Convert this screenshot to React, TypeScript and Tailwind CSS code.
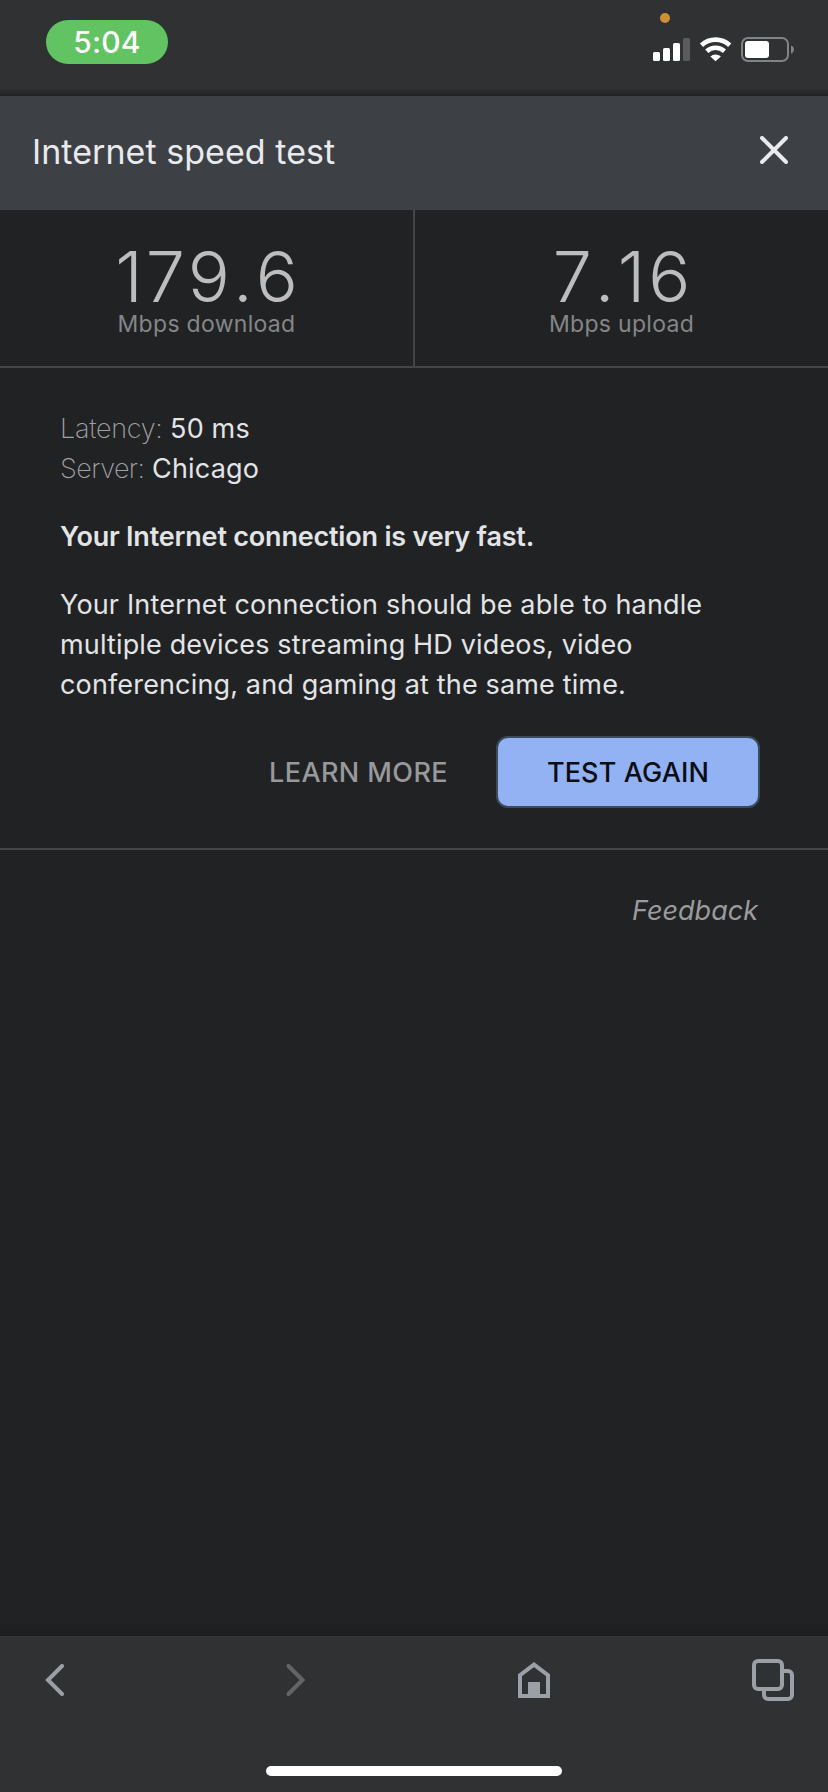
const StatusIcons = () => {
  return (
    <svg width="144" height="40" viewBox="650 30 144 40" fill="none" aria-hidden="true">
      <rect x="653" y="52" width="7" height="9" rx="1.6" fill="#fff" />
      <rect x="663" y="48" width="7" height="13" rx="1.6" fill="#fff" />
      <rect x="673" y="43" width="7" height="18" rx="1.6" fill="#fff" />
      <rect x="683" y="38" width="7" height="23" rx="1.6" fill="#5b5b5d" />
      <g stroke="#fff" strokeWidth="4.6">
        <path d="M701.5 45.2a20.6 20.6 0 0 1 28.2 0" />
        <path d="M706.8 51.2a13 13 0 0 1 17.6 0" />
      </g>
      <path d="M710.3 56.4a8.2 8.2 0 0 1 10.6 0l-5.3 4.8z" fill="#fff" />
      <rect x="742" y="38" width="46" height="23" rx="6" stroke="#838384" strokeWidth="2" />
      <rect x="745" y="41" width="24" height="17" rx="3" fill="#fff" />
      <path d="M791 45.5c4 1.2 4 7 0 8.2z" fill="#838384" />
    </svg>
  );
};

const StatusBar = () => {
  return (
    <div className="relative flex h-24 items-start justify-between bg-linear-to-b from-[#303133] from-92% to-[#202123] pl-[46px] pr-[34px] pt-5">
      <div className="flex h-11 w-[122px] items-center justify-center rounded-full bg-[#61c361] text-[30px] font-medium tracking-[0.2px] text-white">
        5:04
      </div>
      <div className="pt-[10px]">
        <StatusIcons />
      </div>
      <span className="absolute left-[660px] top-[13px] size-[10px] rounded-full bg-[#d18f35]" />
    </div>
  );
};

const Header = () => {
  return (
    <header className="flex h-[114px] items-center justify-between bg-[#3d4044] pl-8 pr-10">
      <h1 className="mb-[3px] text-[34px] leading-[44px] tracking-[0.05px] text-[#e8eaed]">Internet speed test</h1>
      <button type="button" aria-label="Close" className="mb-[6px]">
        <svg width="28" height="28" viewBox="0 0 28 28" stroke="#e8eaed" strokeWidth="4" strokeLinecap="round">
          <path d="M2 2l24 24M26 2L2 26" />
        </svg>
      </button>
    </header>
  );
};

type MetricProps = {
  value: string;
  label: string;
};

const Metric = ({ value, label }: MetricProps) => {
  return (
    <div className="flex flex-col items-center pt-8">
      <span className="pl-[3px] text-[70px] font-light leading-[70px] tracking-[3px] text-[#bdbdbe] [font-kerning:none]">
        {value}
      </span>
      <span className="-mt-0.5 text-[23px] leading-7 tracking-[0.3px] text-[#858688]">{label}</span>
    </div>
  );
};

const Results = () => {
  return (
    <section className="flex h-[482px] flex-col border-b-2 border-[#444546] pl-[60px] pr-[68px] pt-[41px] text-[27px] leading-10 tracking-[0.15px] text-[#e3e4e6]">
      <p>
        <span className="font-extralight tracking-[-0.3px] text-[#a0a1a3]">Latency:</span> 50 ms
      </p>
      <p>
        <span className="font-extralight tracking-[-0.6px] text-[#a0a1a3]">Server:</span> Chicago
      </p>
      <p className="mt-7 font-semibold tracking-[-0.2px]">Your Internet connection is very fast.</p>
      <p className="mt-7">
        Your Internet connection should be able to handle
        <br />
        multiple devices streaming HD videos, video
        <br />
        conferencing, and gaming at the same time.
      </p>
      <div className="mt-[31px] flex items-center justify-end gap-12">
        <button type="button" className="pt-0.5 font-medium tracking-[0.4px] text-[#98999b]">
          LEARN MORE
        </button>
        <button
          type="button"
          className="h-[72px] w-[264px] rounded-xl border-2 border-[#3c4a5e] bg-[#92b2f3] pt-0.5 font-medium text-[#0b0d12]">
          TEST AGAIN
        </button>
      </div>
    </section>
  );
};

const Toolbar = () => {
  return (
    <nav className="flex h-[156px] flex-col items-center border-t border-[#343537] bg-[#303133]">
      <div className="flex h-[86px] w-full items-center justify-between px-[34px]">
        <svg width="42" height="32" viewBox="0 0 42 32" fill="none" stroke="#9aa0a6" strokeWidth="4" strokeLinecap="round">
          <path d="M28 2L14 16l14 14" />
        </svg>
        <svg width="42" height="32" viewBox="0 0 42 32" fill="none" stroke="#636466" strokeWidth="4" strokeLinecap="round">
          <path d="M15.5 2l14 14-14 14" />
        </svg>
        <svg width="42" height="36" viewBox="-5 0 42 36" fill="none">
          <path d="M2 34V13.2L16 2.6l14 10.6V34z" stroke="#9aa0a6" strokeWidth="4" />
          <path d="M10 20h12v14H10z" fill="#9aa0a6" />
        </svg>
        <svg width="42" height="42" viewBox="0 0 42 42" fill="none" stroke="#9aa0a6" strokeWidth="4">
          <rect x="2" y="2" width="28" height="28" rx="4" />
          <path d="M31 12h5a4 4 0 0 1 4 4v20a4 4 0 0 1-4 4H16a4 4 0 0 1-4-4v-5" />
        </svg>
      </div>
      <div className="mt-[43px] h-[10px] w-[296px] rounded-full bg-white" />
    </nav>
  );
};

const App = () => {
  return (
    <div className="flex h-[1792px] w-[828px] flex-col bg-[#212224] font-['Inter','Liberation_Sans',sans-serif]">
      <StatusBar />
      <Header />
      <div className="grid h-[158px] grid-cols-[415px_413px] border-b-2 border-[#444546]">
        <div className="border-r-2 border-[#444546]">
          <Metric value="179.6" label="Mbps download" />
        </div>
        <Metric value="7.16" label="Mbps upload" />
      </div>
      <Results />
      <div className="flex grow items-start justify-end bg-linear-to-b from-[#212224] from-98% to-[#1d1e20] pr-[70px] pt-[41px]">
        <a href="#" className="text-[27px] italic leading-10 text-[#9a9b9d]">
          Feedback
        </a>
      </div>
      <Toolbar />
    </div>
  );
};

export default App;
